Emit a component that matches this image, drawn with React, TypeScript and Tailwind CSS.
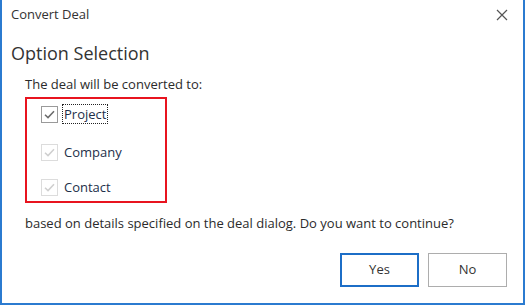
import React from "react";

const font = { fontFamily: '"Open Sans", "Noto Sans", sans-serif' };

const CheckBox = ({ active }: { active?: boolean }) => (
  <span
    className={
      "flex h-[17px] w-[17px] items-center justify-center border bg-white " +
      (active ? "border-[#9a9a9a]" : "border-[#dcdcdc]")
    }
  >
    <svg width="13" height="13" viewBox="0 0 13 13" fill="none">
      <path
        d="M2 6.8 L5 9.6 L11 3.2"
        stroke={active ? "#6b6b6b" : "#cfcfcf"}
        strokeWidth="1.5"
      />
    </svg>
  </span>
);

const Option = ({ label, active, className }: { label: string; active?: boolean; className?: string }) => (
  <div className={"flex items-center gap-[5px] " + (className ?? "")}>
    <CheckBox active={active} />
    <span
      className={
        "px-[1px] leading-[18px] text-[#1d2f4a] " +
        (active ? "outline outline-1 outline-dotted outline-[#222]" : "")
      }
    >
      {label}
    </span>
  </div>
);

export default function App() {
  return (
    <div
      className="flex h-[305px] w-[525px] flex-col border-x-2 border-b-2 border-[#2b7bd0] bg-white text-[13px] text-[#2b2b2b]"
      style={font}
    >
      <div className="flex h-[30px] items-center justify-between pl-[9px] pr-[15px]">
        <span className="text-[#333]">Convert Deal</span>
        <svg width="12" height="12" viewBox="0 0 12 12">
          <path d="M1 1 L11 11 M11 1 L1 11" stroke="#555" strokeWidth="1.2" />
        </svg>
      </div>
      <div className="flex flex-1 flex-col pl-[9px] pr-[14px]">
        <div className="mt-[10px] text-[18px] leading-[26px] text-[#333]">Option Selection</div>
        <div className="mt-[9px] pl-[14px] leading-[18px]">The deal will be converted to:</div>
        <div className="ml-[14px] mt-[4px] flex h-[106px] w-[142px] flex-col border-2 border-[#e8141f] pl-[14px] pt-[6px]">
          <Option label="Project" active />
          <Option label="Company" className="mt-[20px]" />
          <Option label="Contact" className="mt-[17px]" />
        </div>
        <div className="mt-[11px] pl-[14px] leading-[18px]">
          based on details specified on the deal dialog. Do you want to continue?
        </div>
        <div className="mt-[21px] flex justify-end gap-[9px] pr-[2px]">
          <button className="h-[34px] w-[79px] border-2 border-[#1c6ec7] bg-white text-[#333]">Yes</button>
          <button className="h-[34px] w-[79px] border border-[#adadad] bg-white text-[#333]">No</button>
        </div>
      </div>
    </div>
  );
}
